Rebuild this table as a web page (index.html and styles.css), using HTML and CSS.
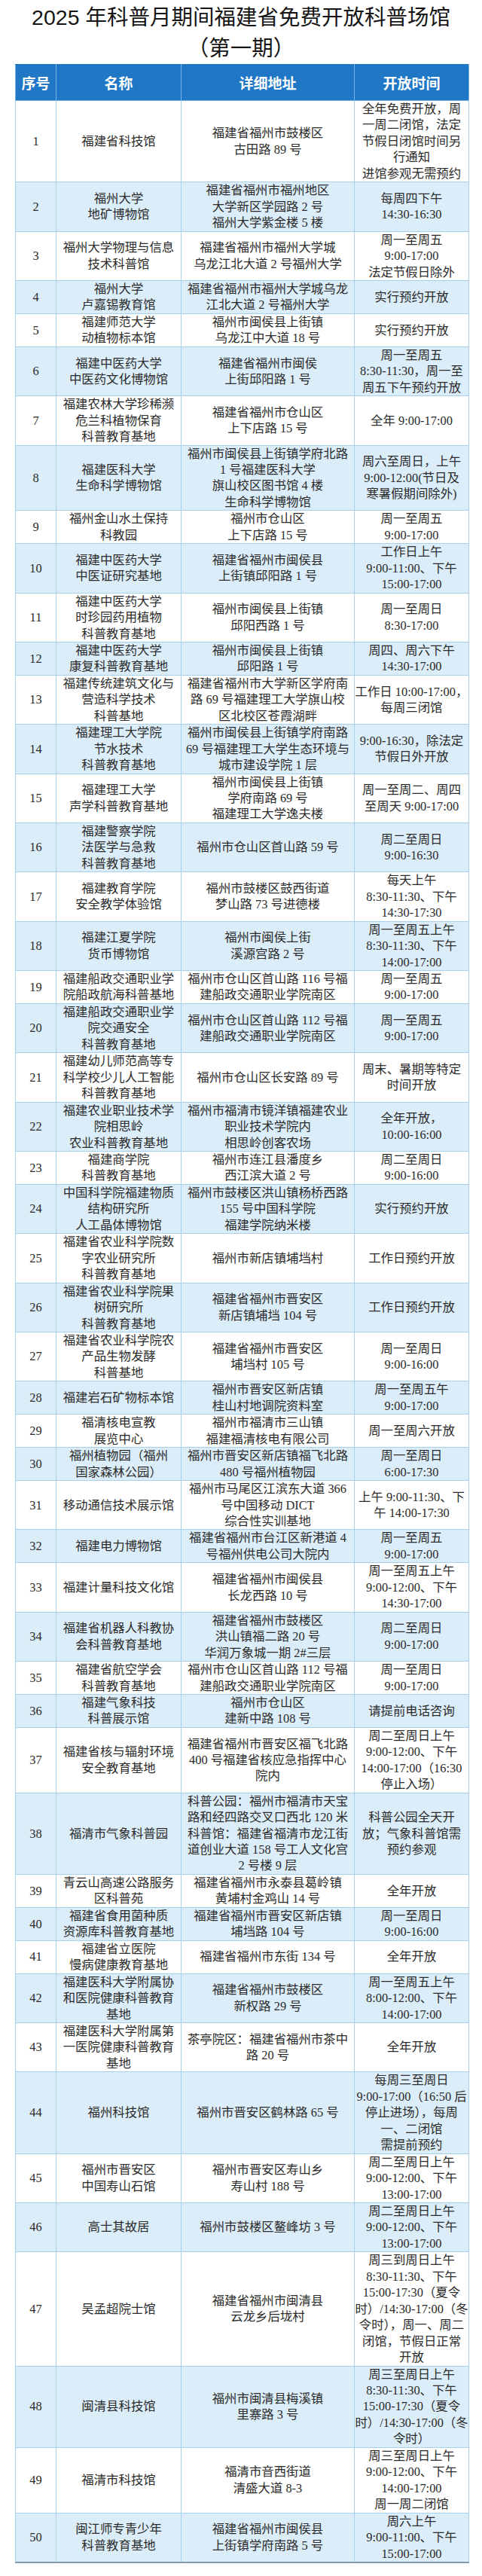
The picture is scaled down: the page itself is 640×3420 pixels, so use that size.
FILE: index.html
```html
<!DOCTYPE html>
<html lang="zh-CN">
<head>
<meta charset="utf-8">
<title>2025年科普月期间福建省免费开放科普场馆（第一期）</title>
<link rel="stylesheet" href="styles.css">
</head>
<body>
<h1 class="title"><span class="title-line">2025 年科普月期间福建省免费开放科普场馆</span><span class="title-line">（第一期）</span></h1>
<table class="venues">
<colgroup>
<col class="c-no"><col class="c-name"><col class="c-addr"><col class="c-time">
</colgroup>
<thead>
<tr><th>序号</th><th>名称</th><th>详细地址</th><th>开放时间</th></tr>
</thead>
<tbody>
<tr><td>1</td><td>福建省科技馆</td><td>福建省福州市鼓楼区<br>古田路 89 号</td><td>全年免费开放，周<br>一周二闭馆，法定<br>节假日闭馆时间另<br>行通知<br>进馆参观无需预约</td></tr>
<tr><td>2</td><td>福州大学<br>地矿博物馆</td><td>福建省福州市福州地区<br>大学新区学园路 2 号<br>福州大学紫金楼 5 楼</td><td>每周四下午<br>14:30-16:30</td></tr>
<tr><td>3</td><td>福州大学物理与信息<br>技术科普馆</td><td>福建省福州市福州大学城<br>乌龙江北大道 2 号福州大学</td><td>周一至周五<br>9:00-17:00<br>法定节假日除外</td></tr>
<tr><td>4</td><td>福州大学<br>卢嘉锡教育馆</td><td>福建省福州市福州大学城乌龙<br>江北大道 2 号福州大学</td><td>实行预约开放</td></tr>
<tr><td>5</td><td>福建师范大学<br>动植物标本馆</td><td>福州市闽侯县上街镇<br>乌龙江中大道 18 号</td><td>实行预约开放</td></tr>
<tr><td>6</td><td>福建中医药大学<br>中医药文化博物馆</td><td>福建省福州市闽侯<br>上街邱阳路 1 号</td><td>周一至周五<br>8:30-11:30，周一至<br>周五下午预约开放</td></tr>
<tr><td>7</td><td>福建农林大学珍稀濒<br>危兰科植物保育<br>科普教育基地</td><td>福建省福州市仓山区<br>上下店路 15 号</td><td>全年 9:00-17:00</td></tr>
<tr><td>8</td><td>福建医科大学<br>生命科学博物馆</td><td>福州市闽侯县上街镇学府北路<br>1 号福建医科大学<br>旗山校区图书馆 4 楼<br>生命科学博物馆</td><td>周六至周日，上午<br>9:00-12:00(节日及<br>寒暑假期间除外)</td></tr>
<tr><td>9</td><td>福州金山水土保持<br>科教园</td><td>福州市仓山区<br>上下店路 15 号</td><td>周一至周五<br>9:00-17:00</td></tr>
<tr><td>10</td><td>福建中医药大学<br>中医证研究基地</td><td>福建省福州市闽侯县<br>上街镇邱阳路 1 号</td><td>工作日上午<br>9:00-11:00、下午<br>15:00-17:00</td></tr>
<tr><td>11</td><td>福建中医药大学<br>时珍园药用植物<br>科普教育基地</td><td>福州市闽侯县上街镇<br>邱阳西路 1 号</td><td>周一至周日<br>8:30-17:00</td></tr>
<tr><td>12</td><td>福建中医药大学<br>康复科普教育基地</td><td>福州市闽侯县上街镇<br>邱阳路 1 号</td><td>周四、周六下午<br>14:30-17:00</td></tr>
<tr><td>13</td><td>福建传统建筑文化与<br>营造科学技术<br>科普基地</td><td>福建省福州市大学新区学府南<br>路 69 号福建理工大学旗山校<br>区北校区苍霞湖畔</td><td>工作日 10:00-17:00，<br>每周三闭馆</td></tr>
<tr><td>14</td><td>福建理工大学院<br>节水技术<br>科普教育基地</td><td>福州市闽侯县上街镇学府南路<br>69 号福建理工大学生态环境与<br>城市建设学院 1 层</td><td>9:00-16:30，除法定<br>节假日外开放</td></tr>
<tr><td>15</td><td>福建理工大学<br>声学科普教育基地</td><td>福州市闽侯县上街镇<br>学府南路 69 号<br>福建理工大学逸夫楼</td><td>周一至周二、周四<br>至周天 9:00-17:00</td></tr>
<tr><td>16</td><td>福建警察学院<br>法医学与急救<br>科普教育基地</td><td>福州市仓山区首山路 59 号</td><td>周二至周日<br>9:00-16:30</td></tr>
<tr><td>17</td><td>福建教育学院<br>安全教学体验馆</td><td>福州市鼓楼区鼓西街道<br>梦山路 73 号进德楼</td><td>每天上午<br>8:30-11:30、下午<br>14:30-17:30</td></tr>
<tr><td>18</td><td>福建江夏学院<br>货币博物馆</td><td>福州市闽侯上街<br>溪源宫路 2 号</td><td>周一至周五上午<br>8:30-11:30、下午<br>14:00-17:00</td></tr>
<tr><td>19</td><td>福建船政交通职业学<br>院船政航海科普基地</td><td>福州市仓山区首山路 116 号福<br>建船政交通职业学院南区</td><td>周一至周五<br>9:00-17:00</td></tr>
<tr><td>20</td><td>福建船政交通职业学<br>院交通安全<br>科普教育基地</td><td>福州市仓山区首山路 112 号福<br>建船政交通职业学院南区</td><td>周一至周五<br>9:00-17:00</td></tr>
<tr><td>21</td><td>福建幼儿师范高等专<br>科学校少儿人工智能<br>科普教育基地</td><td>福州市仓山区长安路 89 号</td><td>周末、暑期等特定<br>时间开放</td></tr>
<tr><td>22</td><td>福建农业职业技术学<br>院相思岭<br>农业科普教育基地</td><td>福州市福清市镜洋镇福建农业<br>职业技术学院内<br>相思岭创客农场</td><td>全年开放，<br>10:00-16:00</td></tr>
<tr><td>23</td><td>福建商学院<br>科普教育基地</td><td>福州市连江县潘度乡<br>西江滨大道 2 号</td><td>周二至周日<br>9:00-16:00</td></tr>
<tr><td>24</td><td>中国科学院福建物质<br>结构研究所<br>人工晶体博物馆</td><td>福州市鼓楼区洪山镇杨桥西路<br>155 号中国科学院<br>福建学院纳米楼</td><td>实行预约开放</td></tr>
<tr><td>25</td><td>福建省农业科学院数<br>字农业研究所<br>科普教育基地</td><td>福州市新店镇埔垱村</td><td>工作日预约开放</td></tr>
<tr><td>26</td><td>福建省农业科学院果<br>树研究所<br>科普教育基地</td><td>福建省福州市晋安区<br>新店镇埔垱 104 号</td><td>工作日预约开放</td></tr>
<tr><td>27</td><td>福建省农业科学院农<br>产品生物发酵<br>科普基地</td><td>福建省福州市晋安区<br>埔垱村 105 号</td><td>周一至周日<br>9:00-16:00</td></tr>
<tr><td>28</td><td>福建岩石矿物标本馆</td><td>福州市晋安区新店镇<br>桂山村地调院资料室</td><td>周一至周五午<br>9:00-17:00</td></tr>
<tr><td>29</td><td>福清核电宣教<br>展览中心</td><td>福州市福清市三山镇<br>福建福清核电有限公司</td><td>周一至周六开放</td></tr>
<tr><td>30</td><td>福州植物园（福州<br>国家森林公园）</td><td>福州市晋安区新店镇福飞北路<br>480 号福州植物园</td><td>周一至周日<br>6:00-17:30</td></tr>
<tr><td>31</td><td>移动通信技术展示馆</td><td>福州市马尾区江滨东大道 366<br>号中国移动 DICT<br>综合性实训基地</td><td>上午 9:00-11:30、下<br>午 14:00-17:30</td></tr>
<tr><td>32</td><td>福建电力博物馆</td><td>福建省福州市台江区新港道 4<br>号福州供电公司大院内</td><td>周一至周五<br>9:00-17:00</td></tr>
<tr><td>33</td><td>福建计量科技文化馆</td><td>福建省福州市闽侯县<br>长龙西路 10 号</td><td>周一至周五上午<br>9:00-12:00、下午<br>14:30-17:00</td></tr>
<tr><td>34</td><td>福建省机器人科教协<br>会科普教育基地</td><td>福建省福州市鼓楼区<br>洪山镇福二路 20 号<br>华润万象城一期 2#三层</td><td>周二至周日<br>9:00-17:00</td></tr>
<tr><td>35</td><td>福建省航空学会<br>科普教育基地</td><td>福州市仓山区首山路 112 号福<br>建船政交通职业学院南区</td><td>周一至周日<br>9:00-17:00</td></tr>
<tr><td>36</td><td>福建气象科技<br>科普展示馆</td><td>福州市仓山区<br>建新中路 108 号</td><td>请提前电话咨询</td></tr>
<tr><td>37</td><td>福建省核与辐射环境<br>安全教育基地</td><td>福建省福州市晋安区福飞北路<br>400 号福建省核应急指挥中心<br>院内</td><td>周二至周日上午<br>9:00-12:00、下午<br>14:00-17:00（16:30<br>停止入场）</td></tr>
<tr><td>38</td><td>福清市气象科普园</td><td>科普公园：福州市福清市天宝<br>路和经四路交叉口西北 120 米<br>科普馆：福建省福清市龙江街<br>道创业大道 158 号工人文化宫<br>2 号楼 9 层</td><td>科普公园全天开<br>放；气象科普馆需<br>预约参观</td></tr>
<tr><td>39</td><td>青云山高速公路服务<br>区科普苑</td><td>福建省福州市永泰县葛岭镇<br>黄埔村金鸡山 14 号</td><td>全年开放</td></tr>
<tr><td>40</td><td>福建省食用菌种质<br>资源库科普教育基地</td><td>福建省福州市晋安区新店镇<br>埔垱路 104 号</td><td>周一至周日<br>9:00-16:00</td></tr>
<tr><td>41</td><td>福建省立医院<br>慢病健康教育基地</td><td>福建省福州市东街 134 号</td><td>全年开放</td></tr>
<tr><td>42</td><td>福建医科大学附属协<br>和医院健康科普教育<br>基地</td><td>福建省福州市鼓楼区<br>新权路 29 号</td><td>周一至周五上午<br>8:00-12:00、下午<br>14:00-17:00</td></tr>
<tr><td>43</td><td>福建医科大学附属第<br>一医院健康科普教育<br>基地</td><td>茶亭院区：福建省福州市茶中<br>路 20 号</td><td>全年开放</td></tr>
<tr><td>44</td><td>福州科技馆</td><td>福州市晋安区鹤林路 65 号</td><td>每周三至周日<br>9:00-17:00（16:50 后<br>停止进场），每周<br>一、二闭馆<br>需提前预约</td></tr>
<tr><td>45</td><td>福州市晋安区<br>中国寿山石馆</td><td>福州市晋安区寿山乡<br>寿山村 188 号</td><td>周二至周日上午<br>9:00-12:00、下午<br>13:00-17:00</td></tr>
<tr><td>46</td><td>高士其故居</td><td>福州市鼓楼区鳌峰坊 3 号</td><td>周二至周日上午<br>9:00-12:00、下午<br>13:00-17:00</td></tr>
<tr><td>47</td><td>吴孟超院士馆</td><td>福建省福州市闽清县<br>云龙乡后垅村</td><td>周三到周日上午<br>8:30-11:30、下午<br>15:00-17:30（夏令<br>时）/14:30-17:00（冬<br>令时），周一、周二<br>闭馆，节假日正常<br>开放</td></tr>
<tr><td>48</td><td>闽清县科技馆</td><td>福州市闽清县梅溪镇<br>里寨路 3 号</td><td>周三至周日上午<br>8:30-11:30、下午<br>15:00-17:30（夏令<br>时）/14:30-17:00（冬<br>令时）</td></tr>
<tr><td>49</td><td>福清市科技馆</td><td>福清市音西街道<br>清盛大道 8-3</td><td>周三至周日上午<br>9:00-12:00、下午<br>14:00-17:00<br>周一周二闭馆</td></tr>
<tr><td>50</td><td>闽江师专青少年<br>科普教育基地</td><td>福建省福州市闽侯县<br>上街镇学府南路 5 号</td><td>周六上午<br>9:00-11:00、下午<br>15:00-17:00</td></tr>
</tbody>
</table>
</body>
</html>
```

FILE: styles.css
```css
html, body {
  margin: 0;
  padding: 0;
  background: #ffffff;
}

body {
  width: 640px;
  color: #2b2b2b;
  font-family: "Liberation Serif", "Noto Sans CJK SC", serif;
}

.title {
  margin: 3px 0 0;
  text-align: center;
  font-family: "Liberation Sans", "Noto Sans CJK SC", sans-serif;
  font-size: 28.5px;
  line-height: 41px;
  font-weight: 400;
  color: #151515;
}

.title-line {
  display: block;
}

.venues {
  margin: 0 0 0 20px;
  width: 602px;
  table-layout: fixed;
  border-collapse: collapse;
  border-left: 1px solid #8cc4da;
  border-right: 1px solid #8cc4da;
  border-bottom: 2px solid #7e9eb6;
}

.c-no { width: 54px; }
.c-name { width: 166px; }
.c-addr { width: 230px; }
.c-time { width: 152px; }

.venues th {
  height: 47px;
  padding: 0;
  background: #1f77c5;
  color: #ffffff;
  font-family: "Noto Sans CJK SC", sans-serif;
  font-weight: 700;
  font-size: 19px;
  line-height: 24px;
  text-align: center;
  vertical-align: middle;
  border: 1px solid #78b2e2;
  border-top-color: #1f77c5;
}

.venues td {
  padding: 0;
  font-size: 16.4px;
  line-height: 21.45px;
  text-align: center;
  vertical-align: middle;
  white-space: nowrap;
  border: 1px solid #a8d1ee;
  background: #ffffff;
}

.venues tbody tr:nth-child(even) td {
  background: #dcedfa;
}
```
